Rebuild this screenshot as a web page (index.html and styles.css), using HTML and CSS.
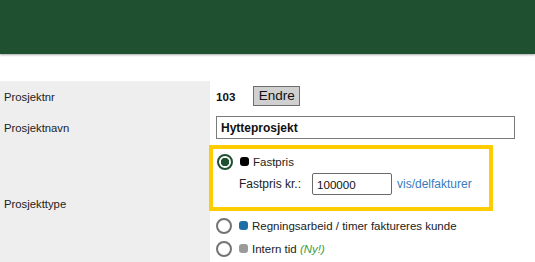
FILE: index.html
```html
<!DOCTYPE html>
<html lang="no">
<head>
    <meta charset="UTF-8">
    <title>Prosjekt</title>
    <link rel="stylesheet" href="styles.css">
</head>
<body>
    <header class="topbar"></header>

    <div class="form">
        <div class="label">Prosjektnr</div>
        <div class="value">
            <b class="nr">103</b>
            <button class="btn">Endre</button>
        </div>

        <div class="label">Prosjektnavn</div>
        <div class="value">
            <input class="name" value="Hytteprosjekt">
        </div>

        <div class="label">Prosjekttype</div>
        <div class="value types">
            <div class="highlight">
                <div class="option"><span class="radio checked"></span><span class="dot black"></span>Fastpris</div>
                <div class="price-row">
                    <span>Fastpris kr.:</span>
                    <input class="price" value="100000">
                    <a href="#" class="link">vis/delfakturer</a>
                </div>
            </div>
            <div class="option"><span class="radio"></span><span class="dot blue"></span>Regningsarbeid / timer faktureres kunde</div>
            <div class="option"><span class="radio"></span><span class="dot grey"></span>Intern tid&nbsp;<i class="new">(Ny!)</i></div>
        </div>
    </div>
</body>
</html>
```

FILE: styles.css
```css
body {
    margin: 0;
    font-family: "Liberation Sans", Arial, sans-serif;
    font-size: 11.5px;
    color: #222;
    background: #fff;
}
.topbar {
    height: 54px;
    background-color: #1f5130;
    box-shadow: 0 1px 2px rgba(0, 0, 0, 0.35);
}
.form {
    margin-top: 27px;
    display: grid;
    grid-template-columns: 210px 1fr;
    grid-template-rows: 31px 31px auto;
}
.label {
    background: #eeeeee;
    padding-left: 4px;
    display: flex;
    align-items: center;
    font-size: 11.3px;
}
.value {
    display: flex;
    align-items: center;
    padding-left: 6px;
}
.nr {
    font-size: 11.6px;
    color: #111;
}
.btn {
    margin-left: 18px;
    margin-top: -2px;
    height: 20px;
    width: 47px;
    padding: 0;
    font-family: "Liberation Sans", Arial, sans-serif;
    font-size: 13.5px;
    color: #111;
    background: #d0d0d0;
    border: 1px solid #6e6e6e;
}
.name {
    box-sizing: border-box;
    width: 299px;
    height: 23px;
    padding: 0 4px;
    border: 1px solid #7a7a7a;
    font-family: "Liberation Sans", Arial, sans-serif;
    font-size: 12px;
    font-weight: bold;
    color: #111;
}
.types {
    flex-direction: column;
    align-items: flex-start;
    padding: 2px 0 5px 0;
}
.highlight {
    box-sizing: border-box;
    width: 284px;
    margin-left: -1px;
    padding: 1px 0 12px 4px;
    border: 4px solid #ffcc00;
}
.types > .option {
    margin-top: 0;
    padding-left: 6px;
}
.types > .option:first-of-type {
    margin-top: 3px;
}
.highlight + .option {
    margin-top: 3px;
}
.option {
    height: 23px;
    display: flex;
    align-items: center;
}
.radio {
    box-sizing: border-box;
    width: 16px;
    height: 16px;
    border: 2px solid #737373;
    border-radius: 50%;
    margin-right: 7px;
    background: #fff;
}
.radio.checked {
    border-color: #1f5130;
    background: radial-gradient(circle, #1f5130 0 4px, #fff 4.5px);
}
.dot {
    width: 9px;
    height: 9px;
    border-radius: 3px;
    margin-right: 4px;
}
.dot.black { background: #000; }
.dot.blue { background: #1e6ea6; }
.dot.grey { background: #9a9a9a; }
.new {
    color: #3c9b3c;
}
.price-row {
    display: flex;
    align-items: center;
    height: 22px;
    padding-left: 22px;
    font-size: 12px;
}
.price {
    box-sizing: border-box;
    width: 80px;
    height: 22px;
    margin: 0 5px 0 11px;
    padding: 0 4px;
    border: 1px solid #6a6a6a;
    border-radius: 2px;
    font-family: "Liberation Sans", Arial, sans-serif;
    font-size: 11.6px;
    color: #111;
}
.link {
    color: #3a7bbd;
    text-decoration: none;
}
```
